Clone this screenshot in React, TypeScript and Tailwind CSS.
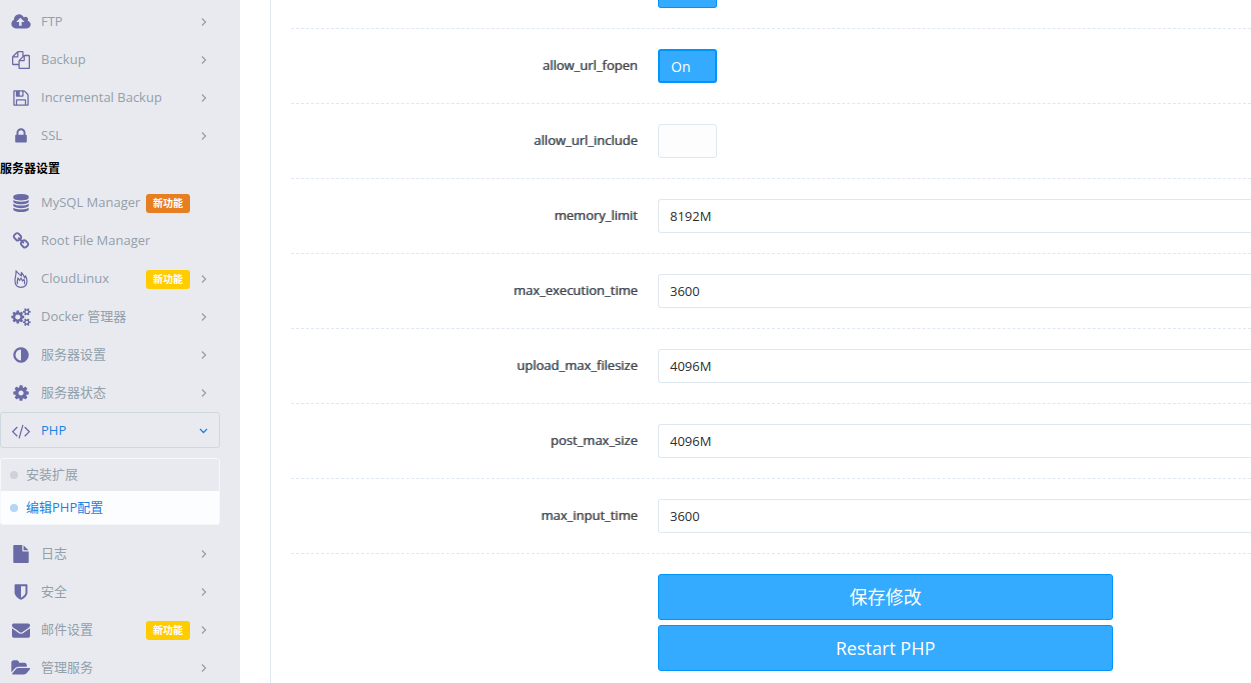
import type { ReactNode } from "react";

interface IconProps {
  d: string;
  wide?: boolean;
}

// 1792-unit glyphs, the wide ones start 64 units to the left
function Icon({ d, wide }: IconProps) {
  return (
    <svg
      viewBox={wide ? "-64 0 1920 1792" : "0 0 1792 1792"}
      className={wide ? "w-5 h-[18px] fill-current" : "w-[18px] h-[18px] fill-current"}
      aria-hidden="true"
    >
      <path d={d} />
    </svg>
  );
}

const paths = {
  cloud: "M1216 864q0-14-9-23l-352-352q-9-9-23-9t-23 9l-351 351q-10 12-10 24 0 14 9 23t23 9h224v352q0 13 9.5 22.5t22.5 9.5h192q13 0 22.5-9.5t9.5-22.5v-352h224q13 0 22.5-9.5t9.5-22.5zm640 288q0 159-112.5 271.5t-271.5 112.5h-1088q-185 0-316.5-131.5t-131.5-316.5q0-130 70-240t188-165q-2-30-2-43 0-212 150-362t362-150q156 0 285.5 87t188.5 231q71-62 166-62 106 0 181 75t75 181q0 76-41 138 130 31 213.5 135.5t83.5 238.5z",
  files: "M1696 384q40 0 68 28t28 68v1216q0 40-28 68t-68 28h-960q-40 0-68-28t-28-68v-288h-544q-40 0-68-28t-28-68v-672q0-40 20-88t48-76l408-408q28-28 76-48t88-20h416q40 0 68 28t28 68v328q68-40 128-40h416zm-544 213l-299 299h299v-299zm-640-384l-299 299h299v-299zm196 647l316-316v-416h-384v416q0 40-28 68t-68 28h-416v640h512v-256q0-40 20-88t48-76zm956 804v-1152h-384v416q0 40-28 68t-68 28h-416v640h896z",
  floppy: "M512 1536h768v-384h-768v384zm896 0h128v-896q0-14-10-38.5t-20-34.5l-281-281q-10-10-34-20t-39-10v416q0 40-28 68t-68 28h-576q-40 0-68-28t-28-68v-416h-128v1280h128v-416q0-40 28-68t68-28h832q40 0 68 28t28 68v416zm-384-928v-320q0-13-9.5-22.5t-22.5-9.5h-192q-13 0-22.5 9.5t-9.5 22.5v320q0 13 9.5 22.5t22.5 9.5h192q13 0 22.5-9.5t9.5-22.5zm640 32v928q0 40-28 68t-68 28h-1344q-40 0-68-28t-28-68v-1344q0-40 28-68t68-28h928q40 0 88 20t76 48l280 280q28 28 48 76t20 88z",
  lock: "M640 768h512v-192q0-106-75-181t-181-75-181 75-75 181v192zm832 96v576q0 40-28 68t-68 28h-960q-40 0-68-28t-28-68v-576q0-40 28-68t68-28h32v-192q0-184 132-316t316-132 316 132 132 316v192h32q40 0 68 28t28 68z",
  database: "M896 768q237 0 443-43t325-127v170q0 69-103 128t-280 93.5-385 34.5-385-34.5-280-93.5-103-128v-170q119 84 325 127t443 43zm0 768q237 0 443-43t325-127v170q0 69-103 128t-280 93.5-385 34.5-385-34.5-280-93.5-103-128v-170q119 84 325 127t443 43zm0-384q237 0 443-43t325-127v170q0 69-103 128t-280 93.5-385 34.5-385-34.5-280-93.5-103-128v-170q119 84 325 127t443 43zm0-1152q208 0 385 34.5t280 93.5 103 128v128q0 69-103 128t-280 93.5-385 34.5-385-34.5-280-93.5-103-128v-128q0-69 103-128t280-93.5 385-34.5z",
  link: "M1520 1216q0-40-28-68l-208-208q-28-28-68-28-42 0-72 32 3 3 19 18.5t21.5 21.5 15 19 13 25.5 3.5 27.5q0 40-28 68t-68 28q-15 0-27.5-3.5t-25.5-13-19-15-21.5-21.5-18.5-19q-33 31-33 73 0 40 28 68l206 207q27 27 68 27 40 0 68-26l147-146q28-28 28-67zm-703-705q0-40-28-68l-206-207q-28-28-68-28-39 0-68 27l-147 146q-28 28-28 67 0 40 28 68l208 208q27 27 68 27 42 0 72-31-3-3-19-18.5t-21.5-21.5-15-19-13-25.5-3.5-27.5q0-40 28-68t68-28q15 0 27.5 3.5t25.5 13 19 15 21.5 21.5 18.5 19q33-31 33-73zm895 705q0 120-85 203l-147 146q-83 83-203 83-121 0-204-85l-206-207q-83-83-83-203 0-123 88-209l-88-88q-86 88-208 88-120 0-204-84l-208-208q-84-84-84-204t85-203l147-146q83-83 203-83 121 0 204 85l206 207q83 83 83 203 0 123-88 209l88 88q86-88 208-88 120 0 204 84l208 208q84 84 84 204z",
  cogs: "M832 896q0-106-75-181t-181-75-181 75-75 181 75 181 181 75 181-75 75-181zm768 512q0-52-38-90t-90-38-90 38-38 90q0 53 37.5 90.5t90.5 37.5 90.5-37.5 37.5-90.5zm0-1024q0-52-38-90t-90-38-90 38-38 90q0 53 37.5 90.5t90.5 37.5 90.5-37.5 37.5-90.5zm-384 421v185q0 10-7 19.5t-16 10.5l-155 24q-11 35-32 76 34 48 90 115 7 11 7 20 0 12-7 19-23 30-82.5 89.5t-78.5 59.5q-11 0-21-7l-115-90q-37 19-77 31-11 108-23 155-7 24-30 24h-186q-11 0-20-7.5t-10-17.5l-23-153q-34-10-75-31l-118 89q-7 7-20 7-11 0-21-8-144-133-144-160 0-9 7-19 10-14 41-53t47-61q-23-44-35-82l-152-24q-10-1-17-9.5t-7-19.5v-185q0-10 7-19.5t16-10.5l155-24q11-35 32-76-34-48-90-115-7-11-7-20 0-12 7-20 22-30 82-89t79-59q11 0 21 7l115 90q34-18 77-32 11-108 23-154 7-24 30-24h186q11 0 20 7.5t10 17.5l23 153q34 10 75 31l118-89q8-7 20-7 11 0 21 8 144 133 144 160 0 8-7 19-12 16-42 54t-45 60q23 48 34 82l152 23q10 2 17 10.5t7 19.5zm640 533v140q0 16-149 31-12 27-30 52 51 113 51 138 0 4-4 7-122 71-124 71-8 0-46-47t-52-68q-20 2-30 2t-30-2q-14 21-52 68t-46 47q-2 0-124-71-4-3-4-7 0-25 51-138-18-25-30-52-149-15-149-31v-140q0-16 149-31 13-29 30-52-51-113-51-138 0-4 4-7 4-2 35-20t59-34 30-16q8 0 46 46.5t52 67.5q20-2 30-2t30 2q51-71 92-112l6-2q4 0 124 70 4 3 4 7 0 25-51 138 17 23 30 52 149 15 149 31zm0-1024v140q0 16-149 31-12 27-30 52 51 113 51 138 0 4-4 7-122 71-124 71-8 0-46-47t-52-68q-20 2-30 2t-30-2q-14 21-52 68t-46 47q-2 0-124-71-4-3-4-7 0-25 51-138-18-25-30-52-149-15-149-31v-140q0-16 149-31 13-29 30-52-51-113-51-138 0-4 4-7 4-2 35-20t59-34 30-16q8 0 46 46.5t52 67.5q20-2 30-2t30 2q51-71 92-112l6-2q4 0 124 70 4 3 4 7 0 25-51 138 17 23 30 52 149 15 149 31z",
  adjust: "M896 1440v-1088q-148 0-273 73t-198 198-73 273 73 273 198 198 273 73zm768-544q0 209-103 385.5t-279.5 279.5-385.5 103-385.5-103-279.5-279.5-103-385.5 103-385.5 279.5-279.5 385.5-103 385.5 103 279.5 279.5 103 385.5z",
  cog: "M1152 896q0-106-75-181t-181-75-181 75-75 181 75 181 181 75 181-75 75-181zm512-109v222q0 12-8 23t-20 13l-185 28q-19 54-39 91 35 50 107 138 10 12 10 25t-9 23q-27 37-99 108t-94 71q-12 0-26-9l-138-108q-44 23-91 38-16 136-29 186-7 28-36 28h-222q-14 0-24.5-8.5t-11.5-21.5l-28-184q-49-16-90-37l-141 107q-10 9-25 9-14 0-25-11-126-114-165-168-7-10-7-23 0-12 8-23 15-21 51-66.5t54-70.5q-27-50-41-99l-183-27q-13-2-21-12.5t-8-23.5v-222q0-12 8-23t19-13l186-28q14-46 39-92-40-57-107-138-10-12-10-24 0-10 9-23 26-36 98.5-107.5t94.5-71.5q13 0 26 10l138 107q44-23 91-38 16-136 29-186 7-28 36-28h222q14 0 24.5 8.5t11.5 21.5l28 184q49 16 90 37l142-107q9-9 24-9 13 0 25 10 129 119 165 170 7 8 7 22 0 12-8 23-15 21-51 66.5t-54 70.5q26 50 41 98l183 28q13 2 21 12.5t8 23.5z",
  code: "M553 1399l-50 50q-10 10-23 10t-23-10l-466-466q-10-10-10-23t10-23l466-466q10-10 23-10t23 10l50 50q10 10 10 23t-10 23l-393 393 393 393q10 10 10 23t-10 23zm591-1067l-373 1291q-4 13-15.500 19.500t-23.500 2.500l-62-17q-13-4-19.500-15.500t-2.500-24.500l373-1291q4-13 15.500-19.500t23.500-2.500l62 17q13 4 19.500 15.500t2.500 24.500zm657 651l-466 466q-10 10-23 10t-23-10l-50-50q-10-10-10-23t10-23l393-393-393-393q-10-10-10-23t10-23l50-50q10-10 23-10t23 10l466 466q10 10 10 23t-10 23z",
  file: "M1152 512v-472q22 14 36 28l408 408q14 14 28 36h-472zm-128 32q0 40 28 68t68 28h544v1056q0 40-28 68t-68 28h-1344q-40 0-68-28t-28-68v-1600q0-40 28-68t68-28h800v544z",
  shield: "M1344 960v-640h-448v1137q119-63 213-137 235-184 235-360zm192-768v768q0 86-33.5 170.5t-83 150-118 127.5-126.5 103-121 77.5-89.5 49.5-42.5 20q-12 6-26 6t-26-6q-16-7-42.5-20t-89.5-49.5-121-77.5-126.5-103-118-127.5-83-150-33.5-170.500v-768q0-26 19-45t45-19h1152q26 0 45 19t19 45z",
  envelope: "M1792 710v794q0 66-47 113t-113 47h-1472q-66 0-113-47t-47-113v-794q44 49 101 87 362 246 497 345 57 42 92.5 65.5t94.5 48 110 24.5h2q51 0 110-24.5t94.5-48 92.5-65.5q170-123 498-345 57-39 100-87zm0-294q0 79-49 151t-122 123q-376 261-468 325-10 7-42.5 31t-54 38.5-52 32.5-57.5 27-50 9h-2q-23 0-50-9t-57.5-27-52-32.5-54-38.5-42.5-31q-91-64-262-182.5t-205-142.5q-62-42-117-115.500t-55-136.500q0-78 41.5-130t118.5-52h1472q65 0 112.5 47t47.5 113z",
  folder: "M1815 952q0 31-31 66l-336 396q-43 51-120.5 86.5t-143.5 35.5h-1088q-34 0-60.5-13t-26.5-43q0-31 31-66l336-396q43-51 120.5-86.5t143.5-35.5h1088q34 0 60.5 13t26.5 43zm-343-344v160h-832q-94 0-197 47.5t-164 119.5l-337 396-5 6q0-4-.5-12.5t-.5-12.5v-960q0-92 66-158t158-66h320q92 0 158 66t66 158v32h544q92 0 158 66t66 158z",
};

function FlameIcon() {
  return (
    <svg viewBox="0 0 18 18" className="w-[18px] h-[18px]" fill="none" stroke="currentColor" strokeWidth="1.2" strokeLinejoin="round" aria-hidden="true">
      <path d="M4 .8C4.500 4.500 3 7 3 10.500C3 15 5.500 17.300 9 17.300S15 15 15 11C15 9.200 14.500 7.500 13.500 5.800L12.700 8C12 5.500 11 3.800 9.300 2.500L9.500 6C8 5 6 3 4 .8Z" />
      <path d="M5.500 14C4.800 12 5.300 10 5.900 7.800L7.500 10.500L9 8L10.500 11L12 9.500C13 11.500 13 13 12.300 14.300" />
    </svg>
  );
}

interface MenuItem {
  label: string;
  icon: ReactNode;
  badge?: "orange" | "yellow";
  arrow?: boolean;
  open?: boolean;
}

const topMenu: MenuItem[] = [
  { label: "FTP", icon: <Icon d={paths.cloud} wide />, arrow: true },
  { label: "Backup", icon: <Icon d={paths.files} />, arrow: true },
  { label: "Incremental Backup", icon: <Icon d={paths.floppy} />, arrow: true },
  { label: "SSL", icon: <Icon d={paths.lock} />, arrow: true },
];

const serverMenu: MenuItem[] = [
  { label: "MySQL Manager", icon: <Icon d={paths.database} />, badge: "orange" },
  { label: "Root File Manager", icon: <Icon d={paths.link} /> },
  { label: "CloudLinux", icon: <FlameIcon />, badge: "yellow", arrow: true },
  { label: "Docker 管理器", icon: <Icon d={paths.cogs} wide />, arrow: true },
  { label: "服务器设置", icon: <Icon d={paths.adjust} />, arrow: true },
  { label: "服务器状态", icon: <Icon d={paths.cog} />, arrow: true },
  { label: "PHP", icon: <Icon d={paths.code} wide />, arrow: true, open: true },
];

const bottomMenu: MenuItem[] = [
  { label: "日志", icon: <Icon d={paths.file} />, arrow: true },
  { label: "安全", icon: <Icon d={paths.shield} />, arrow: true },
  { label: "邮件设置", icon: <Icon d={paths.envelope} />, badge: "yellow", arrow: true },
  { label: "管理服务", icon: <Icon d={paths.folder} wide />, arrow: true },
];

function MenuLink({ item }: { item: MenuItem }) {
  return (
    <a
      href="#"
      className={`flex items-center h-9 pt-0.5 pl-[9px] pr-2.5 rounded-[3px] border ${
        item.open ? "border-[#cfd8dd] text-[#1c82e1]" : "border-transparent text-[#92a0ab]"
      }`}
    >
      <span className="flex justify-center w-[22px] mr-[9px] shrink-0 text-[#6a6aa6]">{item.icon}</span>
      <span className="flex-1 whitespace-nowrap">{item.label}</span>
      {item.badge && (
        <span
          className={`px-[7px] h-[19px] mr-[9px] rounded-[3px] text-[10px] leading-[19px] font-bold text-white ${
            item.badge === "orange" ? "bg-[#e67e22]" : "bg-[#ffcc00]"
          }`}
        >
          新功能
        </span>
      )}
      <svg viewBox="0 0 10 10" className="w-2.5 h-2.5 shrink-0" fill="none" stroke="currentColor" strokeWidth="1.3" aria-hidden="true">
        {item.arrow && <path d={item.open ? "M1 3L4.500 6.500L8 3" : "M3 1.500L6.500 5L3 8.500"} />}
      </svg>
    </a>
  );
}

function Sidebar() {
  return (
    <nav className="w-60 shrink-0 pt-[3px] pr-5 bg-[#e9eaef] overflow-hidden">
      <div className="flex flex-col gap-0.5">
        {topMenu.map((item) => (
          <MenuLink key={item.label} item={item} />
        ))}
        <h2 className="h-[27px] text-xs leading-[27px] font-bold text-black">服务器设置</h2>
        {serverMenu.map((item) => (
          <MenuLink key={item.label} item={item} />
        ))}
      </div>
      <ul className="my-2.5 border border-[#f6f7f9] rounded-[3px]">
        <li>
          <a href="#" className="flex items-center h-8 pl-[9px] gap-2 text-[#92a0ab]">
            <span className="w-2 h-2 rounded-full bg-[#ced2d9]" />
            安装扩展
          </a>
        </li>
        <li>
          <a href="#" className="flex items-center h-[33px] pl-[9px] gap-2 bg-[#fcfdfe] text-[#1c82e1]">
            <span className="w-2 h-2 rounded-full bg-[#b2d6f5]" />
            编辑PHP配置
          </a>
        </li>
      </ul>
      <div className="flex flex-col gap-0.5">
        {bottomMenu.map((item) => (
          <MenuLink key={item.label} item={item} />
        ))}
      </div>
    </nav>
  );
}

const fields = [
  { name: "memory_limit", value: "8192M" },
  { name: "max_execution_time", value: "3600" },
  { name: "upload_max_filesize", value: "4096M" },
  { name: "post_max_size", value: "4096M" },
  { name: "max_input_time", value: "3600" },
];

function FormRow({ name, children }: { name: string; children: ReactNode }) {
  return (
    <div className="flex gap-5 py-5 border-b border-dashed border-[#dfe8f1]">
      <label
        htmlFor={name}
        className="w-[347px] shrink-0 leading-8 text-right text-[#3e4855] [text-shadow:-1px_0_0_#3e485599]"
      >
        {name}
      </label>
      {children}
    </div>
  );
}

export default function App() {
  return (
    <div className="flex h-screen overflow-hidden bg-white font-['Open_Sans','Noto_Sans_CJK_SC',sans-serif] text-[13px]">
      <Sidebar />
      <main className="flex-1 min-w-0 ml-[30px] pl-5 border-l border-[#dfe8f1] overflow-hidden">
        <form>
          <div className="pb-5 pl-[367px] border-b border-dashed border-[#dfe8f1]">
            <button type="button" aria-label="On" className="block w-[59px] h-2 rounded-b-[3px] border border-t-0 border-[#0094ff] bg-[#35abff]" />
          </div>
          <FormRow name="allow_url_fopen">
            <button
              type="button"
              id="allow_url_fopen"
              className="w-[59px] h-[34px] pt-0.5 pl-[11px] rounded-[3px] border-2 border-[#0094ff] bg-[#35abff] text-left text-sm text-white"
            >
              On
            </button>
          </FormRow>
          <FormRow name="allow_url_include">
            <button type="button" id="allow_url_include" className="w-[59px] h-[34px] rounded-[3px] border border-[#dfe8f1] bg-[#fdfdfe]" />
          </FormRow>
          {fields.map((field) => (
            <FormRow key={field.name} name={field.name}>
              <input
                id={field.name}
                type="text"
                defaultValue={field.value}
                className="flex-1 min-w-0 h-[34px] px-[11px] rounded-l-[3px] border border-r-0 border-[#dfe8f1] bg-white text-[#2b2f33]"
              />
            </FormRow>
          ))}
          <div className="flex flex-col gap-[5px] pt-5 pl-[367px]">
            <button type="submit" className="w-[455px] h-[46px] rounded-[3px] border border-[#0094ff] bg-[#35abff] text-lg text-white">
              保存修改
            </button>
            <button type="button" className="w-[455px] h-[46px] rounded-[3px] border border-[#0094ff] bg-[#35abff] text-lg text-white">
              Restart PHP
            </button>
          </div>
        </form>
      </main>
    </div>
  );
}
